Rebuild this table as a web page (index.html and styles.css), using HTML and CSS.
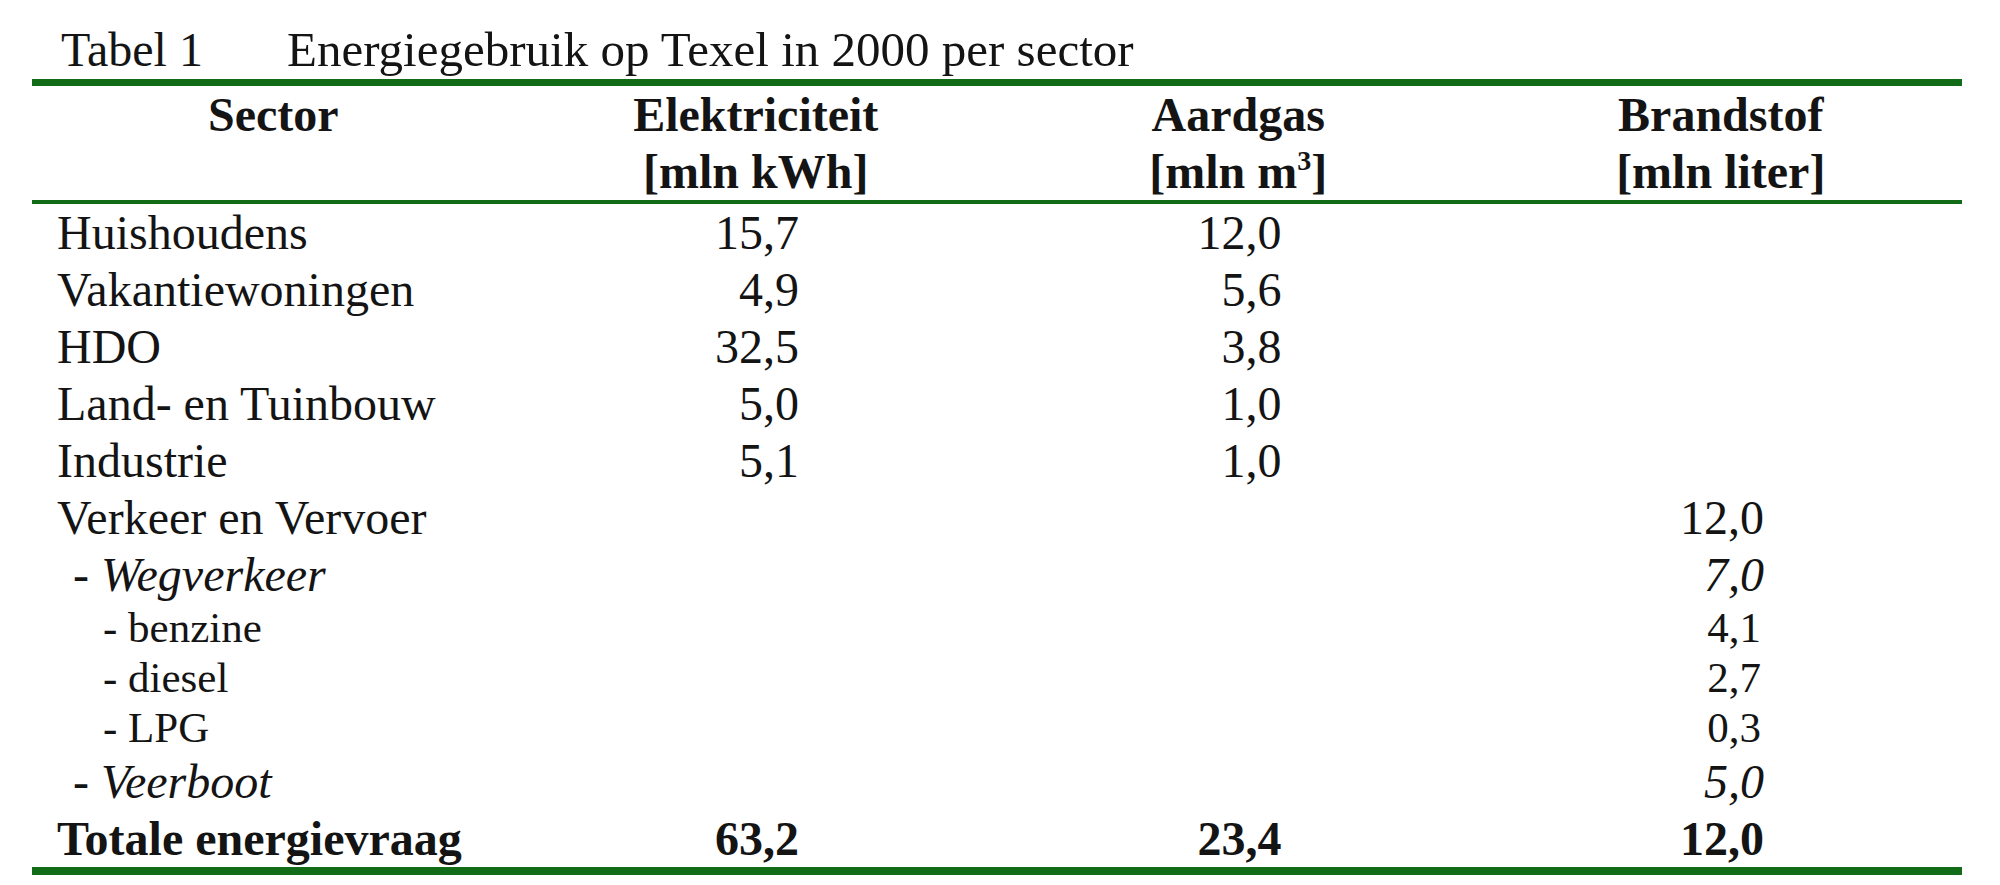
FILE: index.html
```html
<!DOCTYPE html>
<html lang="nl">
<head>
<meta charset="utf-8">
<title>Tabel 1 Energiegebruik op Texel in 2000 per sector</title>
<link rel="stylesheet" href="styles.css">
</head>
<body>
<div class="page">
  <div class="caption"><span class="caption-label">Tabel 1</span><span class="caption-text">Energiegebruik op Texel in 2000 per sector</span></div>
  <table class="energy">
    <colgroup>
      <col class="c"><col class="c"><col class="c"><col class="c">
    </colgroup>
    <thead>
      <tr>
        <th>Sector</th>
        <th>Elektriciteit<br>[mln kWh]</th>
        <th>Aardgas<br>[mln m<sup>3</sup>]</th>
        <th>Brandstof<br>[mln liter]</th>
      </tr>
    </thead>
    <tbody>
      <tr><td class="name">Huishoudens</td><td class="num">15,7</td><td class="num">12,0</td><td class="num"></td></tr>
      <tr><td class="name">Vakantiewoningen</td><td class="num">4,9</td><td class="num">5,6</td><td class="num"></td></tr>
      <tr><td class="name">HDO</td><td class="num">32,5</td><td class="num">3,8</td><td class="num"></td></tr>
      <tr><td class="name">Land- en Tuinbouw</td><td class="num">5,0</td><td class="num">1,0</td><td class="num"></td></tr>
      <tr><td class="name">Industrie</td><td class="num">5,1</td><td class="num">1,0</td><td class="num"></td></tr>
      <tr><td class="name">Verkeer en Vervoer</td><td class="num"></td><td class="num"></td><td class="num">12,0</td></tr>
      <tr class="sub"><td class="name lvl1">- <em>Wegverkeer</em></td><td class="num"></td><td class="num"></td><td class="num"><em>7,0</em></td></tr>
      <tr class="small"><td class="name lvl2">- benzine</td><td class="num"></td><td class="num"></td><td class="num">4,1</td></tr>
      <tr class="small"><td class="name lvl2">- diesel</td><td class="num"></td><td class="num"></td><td class="num">2,7</td></tr>
      <tr class="small"><td class="name lvl2">- LPG</td><td class="num"></td><td class="num"></td><td class="num">0,3</td></tr>
      <tr class="sub"><td class="name lvl1">- <em>Veerboot</em></td><td class="num"></td><td class="num"></td><td class="num"><em>5,0</em></td></tr>
      <tr class="total"><td class="name">Totale energievraag</td><td class="num">63,2</td><td class="num">23,4</td><td class="num">12,0</td></tr>
    </tbody>
  </table>
</div>
</body>
</html>
```

FILE: styles.css
```css
html, body {
  margin: 0;
  padding: 0;
  background: #ffffff;
}

body {
  font-family: "Liberation Serif", "Times New Roman", serif;
  color: #141414;
}

.page {
  padding-left: 32px;
  width: 1930px;
}

.caption {
  padding-top: 22px;
  height: 57px;
  font-size: 48px;
  line-height: 56px;
  white-space: nowrap;
}

.caption-label {
  display: inline-block;
  width: 255px;
  padding-left: 29px;
  box-sizing: border-box;
}

.caption-text {
  font-size: 49px;
}

.energy {
  width: 1930px;
  table-layout: fixed;
  border-collapse: separate;
  border-spacing: 0;
  font-size: 48px;
}

.energy .c {
  width: 25%;
}

.energy th {
  font-weight: bold;
  text-align: center;
  vertical-align: top;
  line-height: 57px;
  padding: 0;
  border-top: 7px solid #126b17;
  border-bottom: 4px solid #126b17;
}

.energy sup {
  font-size: 28px;
  line-height: 0;
  vertical-align: 18px;
}

.energy td {
  padding: 0;
  height: 57px;
  line-height: 57px;
  white-space: nowrap;
  vertical-align: top;
}

.energy td.name {
  padding-left: 25px;
}

.energy td.lvl1 {
  padding-left: 41px;
}

.energy td.lvl2 {
  padding-left: 71px;
}

.energy td.num {
  text-align: right;
  padding-right: 198px;
}

.energy tr.small td {
  font-size: 43px;
  height: 50px;
  line-height: 50px;
}

.energy tr.small td.num {
  padding-right: 201px;
}

.energy tr.total td {
  font-weight: bold;
  border-bottom: 8px solid #126b17;
}
```
